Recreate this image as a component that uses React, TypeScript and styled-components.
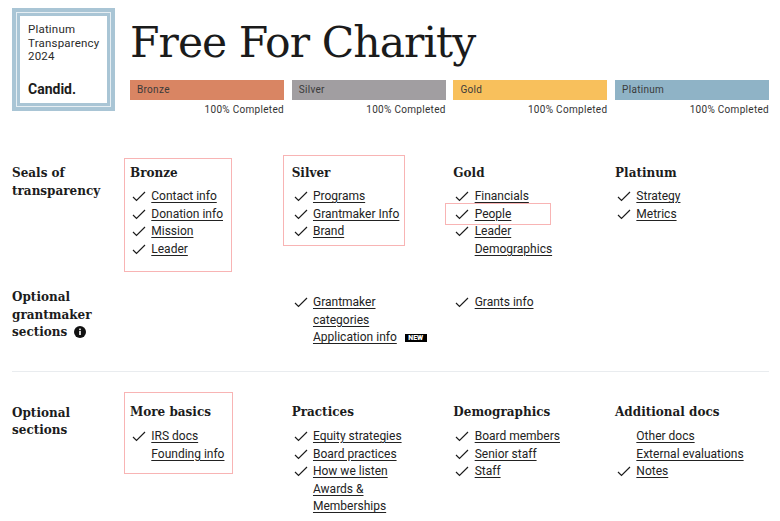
import styled, {createGlobalStyle} from "styled-components";

const GlobalStyle = createGlobalStyle`
  html, body {
    margin: 0;
    padding: 0;
    background: #fff;
    color: #1c1c1c;
    font-family: "Roboto", "Liberation Sans", sans-serif;
  }
`;

const serif = `"DejaVu Serif", "Liberation Serif", serif`;

const Page = styled.div`
  width: 780px;
  height: 521px;
  overflow: hidden;
  box-sizing: border-box;
  padding: 8px 11px 0 12px;
`;

const Header = styled.header`
  display: flex;
  height: 104px;
`;

const Seal = styled.div`
  width: 103px;
  height: 103px;
  flex: none;
  box-sizing: border-box;
  padding: 4px;
  background: #a9c5d5;
`;

const SealRing = styled.div`
  height: 100%;
  box-sizing: border-box;
  padding: 3px;
  border: 1px solid #e6eef3;
  background: #a9c5d5;
`;

const SealInner = styled.div`
  height: 100%;
  box-sizing: border-box;
  padding: 7px 0 6px 8px;
  background: #fff;
  display: flex;
  flex-direction: column;
  justify-content: space-between;
`;

const SealText = styled.div`
  font-size: 11.5px;
  line-height: 13.7px;
  letter-spacing: 0.2px;
  color: #2a2a2a;
`;

const SealBrand = styled.div`
  font-size: 14px;
  font-weight: 700;
  line-height: 16px;
`;

const HeaderMain = styled.div`
  flex: 1;
  margin-left: 15px;
`;

const Title = styled.h1`
  margin: 0;
  height: 72px;
  font-family: ${serif};
  font-weight: 400;
  font-size: 42.5px;
  line-height: 69px;
  letter-spacing: -0.95px;
  color: #1b1b1b;
`;

const Bars = styled.div`
  display: grid;
  grid-template-columns: repeat(4, 154px);
  column-gap: 7.7px;
`;

const Bar = styled.div<{ $color: string }>`
  height: 20px;
  box-sizing: border-box;
  padding-left: 7px;
  background: ${p => p.$color};
  font-size: 10px;
  line-height: 20px;
  letter-spacing: 0.3px;
  color: #3a3a3a;
`;

const Completed = styled.div`
  margin-top: 3px;
  text-align: right;
  font-size: 10px;
  line-height: 13px;
  letter-spacing: 0.3px;
  color: #333;
`;

const Section = styled.section<{ $height: number; $top?: number }>`
  display: grid;
  grid-template-columns: 110.3px repeat(4, 154px);
  column-gap: 7.7px;
  height: ${p => p.$height}px;
  margin-top: ${p => p.$top ?? 0}px;
`;

const Label = styled.div<{ $pad?: number }>`
  padding-top: ${p => p.$pad ?? 1}px;
  font-family: ${serif};
  font-weight: 700;
  font-size: 12px;
  line-height: 17.5px;
`;

const Column = styled.div<{ $pad?: number }>`
  position: relative;
  padding-top: ${p => p.$pad ?? 0}px;
`;

const ColumnTitle = styled.h3<{ $gap?: number }>`
  margin: 0 0 ${p => p.$gap ?? 6}px;
  font-family: ${serif};
  font-weight: 700;
  font-size: 12px;
  line-height: 18px;
`;

const List = styled.ul`
  list-style: none;
  margin: 0;
  padding: 0;
`;

const Item = styled.li`
  display: flex;
  font-size: 12px;
  line-height: 17.5px;
`;

const CheckSlot = styled.span`
  width: 21.3px;
  flex: none;
  padding-left: 2px;
  box-sizing: border-box;
  display: flex;
  height: 17.5px;
  align-items: center;
`;

const ItemText = styled.span`
  max-width: 112px;
`;

const Link = styled.a`
  color: #222;
  text-decoration: underline;
  text-underline-offset: 2px;
`;

const NewTag = styled.span`
  display: inline-block;
  margin: 0 -6px 0 8px;
  padding: 0 3.5px;
  background: #000;
  color: #fff;
  font-size: 7px;
  font-weight: 900;
  line-height: 8px;
  vertical-align: 1px;
`;

const Divider = styled.hr`
  margin: 0;
  border: 0;
  height: 1px;
  background: #e9ecef;
`;

const Highlight = styled.div<{ $top: number; $left: number; $w: number; $h: number }>`
  position: absolute;
  top: ${p => p.$top}px;
  left: ${p => p.$left}px;
  width: ${p => p.$w}px;
  height: ${p => p.$h}px;
  box-sizing: border-box;
  border: 1px solid #f8b4b4;
  pointer-events: none;
`;

const Check = () => (
    <svg width="14" height="11" viewBox="0 0 14 11" fill="none">
        <path d="M1 6 L4.5 9.5 L13 1" stroke="#1c1c1c" strokeWidth="1.2"/>
    </svg>
);

const InfoDot = styled.svg`
  margin-left: 7px;
  vertical-align: -2px;
`;

type Entry = { text: string; done?: boolean; tag?: boolean };

const Entries = ({items}: { items: Entry[] }) => (
    <List>
        {items.map(item => (
            <Item key={item.text}>
                <CheckSlot>{item.done !== false && <Check/>}</CheckSlot>
                <ItemText>
                    <Link>{item.text}</Link>
                    {item.tag && <NewTag>NEW</NewTag>}
                </ItemText>
            </Item>
        ))}
    </List>
);

const levels = [
    {name: "Bronze", color: "#d98563"},
    {name: "Silver", color: "#a19ea1"},
    {name: "Gold", color: "#f8c05c"},
    {name: "Platinum", color: "#8fb3c6"},
];

const App = () => (
    <>
        <GlobalStyle/>
        <Page>
            <Header>
                <Seal>
                    <SealRing>
                        <SealInner>
                            <SealText>Platinum<br/>Transparency<br/>2024</SealText>
                            <SealBrand>Candid.</SealBrand>
                        </SealInner>
                    </SealRing>
                </Seal>
                <HeaderMain>
                    <Title>Free For Charity</Title>
                    <Bars>
                        {levels.map(level => (
                            <div key={level.name}>
                                <Bar $color={level.color}>{level.name}</Bar>
                                <Completed>100% Completed</Completed>
                            </div>
                        ))}
                    </Bars>
                </HeaderMain>
            </Header>

            <Section $height={124} $top={52}>
                <Label>Seals of<br/>transparency</Label>
                <Column>
                    <Highlight $top={-6} $left={-6} $w={108} $h={114}/>
                    <ColumnTitle>Bronze</ColumnTitle>
                    <Entries items={[{text: "Contact info"}, {text: "Donation info"}, {text: "Mission"}, {text: "Leader"}]}/>
                </Column>
                <Column>
                    <Highlight $top={-9} $left={-9} $w={122} $h={91}/>
                    <ColumnTitle>Silver</ColumnTitle>
                    <Entries items={[{text: "Programs"}, {text: "Grantmaker Info"}, {text: "Brand"}]}/>
                </Column>
                <Column>
                    <Highlight $top={39} $left={-8} $w={105.5} $h={22}/>
                    <ColumnTitle>Gold</ColumnTitle>
                    <Entries items={[{text: "Financials"}, {text: "People"}, {text: "Leader Demographics"}]}/>
                </Column>
                <Column>
                    <ColumnTitle>Platinum</ColumnTitle>
                    <Entries items={[{text: "Strategy"}, {text: "Metrics"}]}/>
                </Column>
            </Section>

            <Section $height={83}>
                <Label>
                    Optional<br/>grantmaker<br/>sections
                    <InfoDot width="12" height="12" viewBox="0 0 12 12">
                        <circle cx="6" cy="6" r="6" fill="#111"/>
                        <rect x="5.2" y="5" width="1.6" height="4" fill="#fff"/>
                        <rect x="5.2" y="2.6" width="1.6" height="1.6" fill="#fff"/>
                    </InfoDot>
                </Label>
                <Column/>
                <Column $pad={6}>
                    <Entries items={[{text: "Grantmaker categories"}, {text: "Application info", done: false, tag: true}]}/>
                </Column>
                <Column $pad={6}>
                    <Entries items={[{text: "Grants info"}]}/>
                </Column>
                <Column/>
            </Section>

            <Divider/>

            <Section $height={120} $top={31}>
                <Label $pad={1.5}>Optional<br/>sections</Label>
                <Column>
                    <Highlight $top={-11} $left={-6} $w={109} $h={82}/>
                    <ColumnTitle $gap={7}>More basics</ColumnTitle>
                    <Entries items={[{text: "IRS docs"}, {text: "Founding info", done: false}]}/>
                </Column>
                <Column>
                    <ColumnTitle $gap={7}>Practices</ColumnTitle>
                    <Entries items={[
                        {text: "Equity strategies"},
                        {text: "Board practices"},
                        {text: "How we listen"},
                        {text: "Awards & Memberships", done: false},
                    ]}/>
                </Column>
                <Column>
                    <ColumnTitle $gap={7}>Demographics</ColumnTitle>
                    <Entries items={[{text: "Board members"}, {text: "Senior staff"}, {text: "Staff"}]}/>
                </Column>
                <Column>
                    <ColumnTitle $gap={7}>Additional docs</ColumnTitle>
                    <Entries items={[
                        {text: "Other docs", done: false},
                        {text: "External evaluations", done: false},
                        {text: "Notes"},
                    ]}/>
                </Column>
            </Section>
        </Page>
    </>
);

export default App;
